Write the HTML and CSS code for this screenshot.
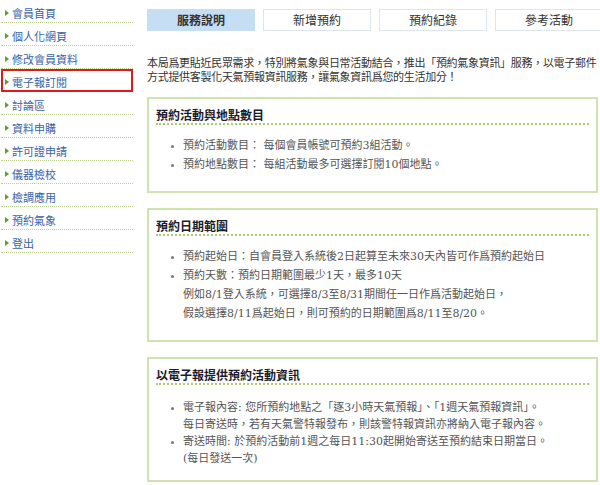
FILE: index.html
```html
<!DOCTYPE html>
<html lang="zh-Hant">
<head>
    <meta charset="UTF-8">
    <title>預約氣象</title>
    <link rel="stylesheet" href="styles.css">
</head>
<body>
    <div class="page">
        <ul class="side-menu">
            <li><a href="#">會員首頁</a></li>
            <li><a href="#">個人化網頁</a></li>
            <li><a href="#">修改會員資料</a></li>
            <li class="current"><a href="#">電子報訂閱</a></li>
            <li><a href="#">討論區</a></li>
            <li><a href="#">資料申購</a></li>
            <li><a href="#">許可證申請</a></li>
            <li><a href="#">儀器檢校</a></li>
            <li><a href="#">檢調應用</a></li>
            <li><a href="#">預約氣象</a></li>
            <li><a href="#">登出</a></li>
        </ul>

        <div class="main">
            <div class="tabs">
                <a href="#" class="tab active">服務說明</a>
                <a href="#" class="tab">新增預約</a>
                <a href="#" class="tab">預約紀錄</a>
                <a href="#" class="tab">參考活動</a>
            </div>

            <p class="intro">本局爲更貼近民眾需求，特別將氣象與日常活動結合，推出「預約氣象資訊」服務，以電子郵件方式提供客製化天氣預報資訊服務，讓氣象資訊爲您的生活加分！</p>

            <div class="box">
                <h3>預約活動與地點數目</h3>
                <ul>
                    <li>預約活動數目： 每個會員帳號可預約3組活動。</li>
                    <li>預約地點數目： 每組活動最多可選擇訂閱10個地點。</li>
                </ul>
            </div>

            <div class="box">
                <h3>預約日期範圍</h3>
                <ul>
                    <li>預約起始日：自會員登入系統後2日起算至未來30天內皆可作爲預約起始日</li>
                    <li>預約天數：預約日期範圍最少1天，最多10天<br>
                        例如8/1登入系統，可選擇8/3至8/31期間任一日作爲活動起始日，<br>
                        假設選擇8/11爲起始日，則可預約的日期範圍爲8/11至8/20。</li>
                </ul>
            </div>

            <div class="box compact">
                <h3>以電子報提供預約活動資訊</h3>
                <ul>
                    <li>電子報內容: 您所預約地點之「逐3小時天氣預報」、「1週天氣預報資訊」。<br>
                        每日寄送時，若有天氣警特報發布，則該警特報資訊亦將納入電子報內容。</li>
                    <li>寄送時間: 於預約活動前1週之每日11:30起開始寄送至預約結束日期當日。<br>
                        (每日發送一次)</li>
                </ul>
            </div>
        </div>
    </div>
</body>
</html>
```

FILE: styles.css
```css
/* CSS */
* {
    margin: 0;
    padding: 0;
    box-sizing: border-box;
}

:root {
    --menu-blue: #3a62a8;
    --menu-green: #5aa02c;
    --dot-line: #b9cf8c;
    --tab-active: #c6def4;
    --tab-border: #dbe6ef;
    --box-border: #cfe3b1;
    --box-dots: #a9cc6e;
    --red: #e0191f;
}

body {
    width: 600px;
    height: 485px;
    overflow: hidden;
    background: #fff;
    font-family: "Noto Sans CJK TC", sans-serif;
    color: #333;
}

.page {
    display: flex;
    gap: 14px;
}

/* left menu */
.side-menu {
    list-style: none;
    width: 133px;
    flex-shrink: 0;
}

.side-menu li {
    padding: 6px 0 1px 11px;
    margin-left: 1px;
    border-bottom: 1px dotted var(--dot-line);
    position: relative;
}

.side-menu li::before {
    content: "";
    position: absolute;
    left: 4px;
    top: 10px;
    border-left: 4px solid var(--menu-green);
    border-top: 3px solid transparent;
    border-bottom: 3px solid transparent;
}

.side-menu li.current {
    outline: 2px solid var(--red);
    outline-offset: -2px;
}

.side-menu a {
    display: block;
    font-size: 11px;
    line-height: 15px;
    color: var(--menu-blue);
    text-decoration: none;
}

/* content */
.main {
    width: 451px;
    flex-shrink: 0;
    padding-top: 9px;
}

.tabs {
    display: flex;
    gap: 8px;
}

.tab {
    flex-shrink: 0;
    width: 108px;
    height: 22px;
    line-height: 20px;
    text-align: center;
    font-size: 12px;
    color: #333;
    text-decoration: none;
    border: 1px solid var(--tab-border);
    background: #fff;
}

.tab.active {
    background: var(--tab-active);
    border-color: var(--tab-active);
    font-weight: 700;
}

.intro {
    margin: 24px 0 14px;
    font-size: 11px;
    line-height: 14px;
    letter-spacing: -0.3px;
    color: #333;
}

.box {
    border: 2px solid var(--box-border);
    padding: 0 7px 17px;
    margin-bottom: 15px;
}

.box h3 {
    padding-top: 8px;
    font-size: 12px;
    line-height: 16px;
    font-weight: 700;
    color: #1c1c2c;
    border-bottom: 2px dotted var(--box-dots);
}

.box ul {
    margin-top: 11px;
    padding-left: 27px;
    font-family: "DejaVu Serif", "Noto Sans CJK TC", serif;
    font-size: 11px;
    line-height: 19px;
    color: #555;
}

.box li::marker {
    color: #777;
    font-size: 9px;
}

.box.compact {
    padding-bottom: 13px;
}

.box.compact ul {
    margin-top: 14px;
    line-height: 17px;
}
```
